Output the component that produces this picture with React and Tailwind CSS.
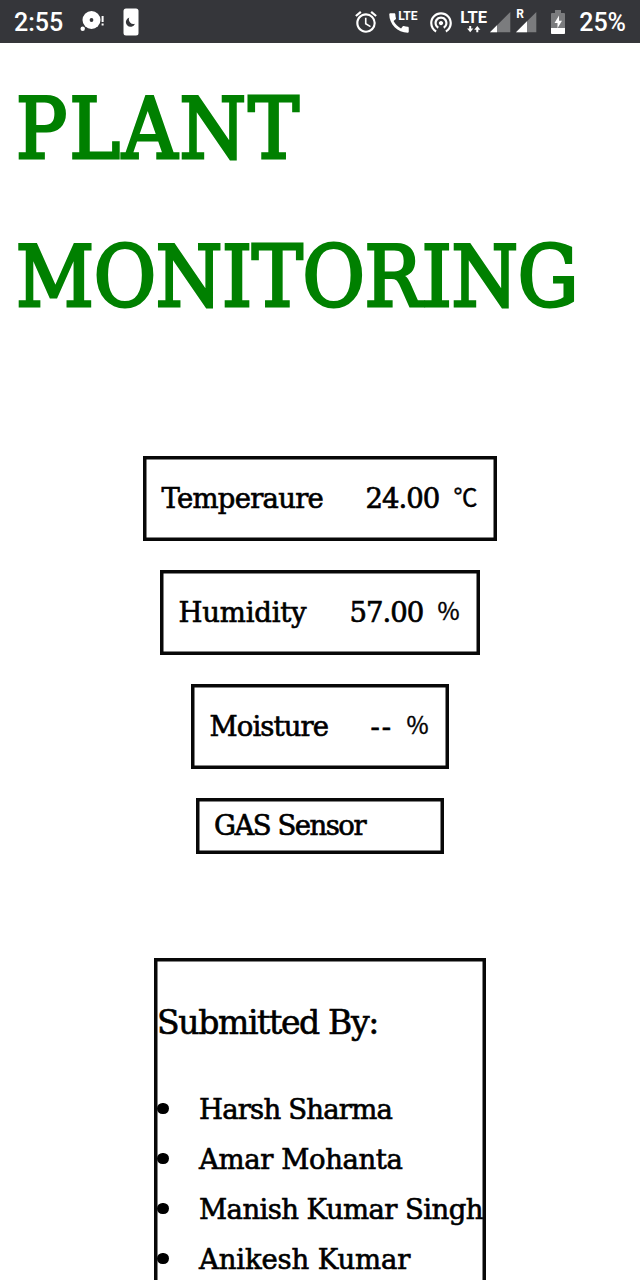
import { MdAlarm, MdCall, MdWifiTethering } from "react-icons/md";

function ChatIcon() {
  return (
    <svg className="block h-6 w-6 shrink-0" viewBox="0 0 24 24" fill="#fff">
      <circle cx="11.5" cy="10" r="9" />
      <circle cx="11.5" cy="10" r="1.9" fill="#35363a" />
      <circle cx="2.7" cy="18.8" r="2.2" />
      <path d="M21.6 6h2v6h-2zM21.6 13.5h2v2h-2z" />
    </svg>
  );
}

function MoonPhoneIcon() {
  return (
    <svg className="block h-7 w-4 shrink-0" viewBox="0 0 16 28">
      <rect x="0.5" y="0.5" width="15" height="27" rx="2.5" fill="#fff" />
      <path d="M6.3 9.5a4.7 4.7 0 1 0 5.7 6.2 4.6 4.6 0 0 1-5.7-6.2z" fill="#35363a" />
    </svg>
  );
}

function CallLteIcon() {
  return (
    <div className="relative h-6 w-[30px] shrink-0">
      <MdCall className="absolute -left-[4px] top-0 h-[26px] w-[26px]" />
      <span className="absolute left-[8px] top-0 text-[12px] font-bold leading-none">LTE</span>
    </div>
  );
}

function LteDataIcon() {
  return (
    <div className="flex w-[27px] shrink-0 flex-col items-center">
      <span className="text-[16.5px] font-bold leading-[15px]">LTE</span>
      <svg className="mt-px block h-[7px] w-[14px]" viewBox="0 0 14 7" fill="#fff">
        <path d="M2.2 0h2v2.5h2.1L3.2 6.2.1 2.5h2.1zM9.3 6.2h2V3.7h2.1L10.3 0 7.2 3.7h2.1z" />
      </svg>
    </div>
  );
}

function SignalIcon({ level, roaming }) {
  return (
    <div className="relative h-6 w-[21px] shrink-0">
      <svg className="block h-6 w-[21px]" viewBox="0 0 21 24">
        <path d="M0 22.3 20.3 2V22.3z" fill="#7b7c7e" />
        <path d={`M0 22.3 ${level} ${22.3 - level}V22.3z`} fill="#fff" />
      </svg>
      {roaming && (
        <span className="absolute -top-[1px] left-0 bg-[#35363a] pr-[2px] text-[12px] font-bold leading-[10px]">R</span>
      )}
    </div>
  );
}

function BatteryIcon() {
  return (
    <svg className="block h-6 w-[14px] shrink-0" viewBox="0 0 14 24">
      <path d="M4 0h6v3h3a1 1 0 0 1 1 1v19a1 1 0 0 1-1 1H1a1 1 0 0 1-1-1V4a1 1 0 0 1 1-1h3z" fill="#7b7c7e" />
      <path d="M0 18h14v5a1 1 0 0 1-1 1H1a1 1 0 0 1-1-1z" fill="#fff" />
      <path d="M8 5.5 3.5 13H6.5v5.2L11 10.8H8z" fill="#fff" />
    </svg>
  );
}

function StatusBar() {
  return (
    <header className="flex h-[43px] items-center bg-[#35363a] pl-[14px] font-['Roboto',sans-serif] font-medium text-white">
      <span className="w-[66px] pt-[2px] text-[25px] leading-none">2:55</span>
      <ChatIcon />
      <div className="ml-[19px]"><MoonPhoneIcon /></div>
      <div className="ml-auto flex items-center pr-[14px]">
        <MdAlarm className="h-[26px] w-[26px]" />
        <div className="ml-[11px]"><CallLteIcon /></div>
        <MdWifiTethering className="ml-[8px] h-[26px] w-[26px]" />
        <div className="ml-[6px]"><LteDataIcon /></div>
        <div className="ml-[3px]"><SignalIcon level={7} /></div>
        <div className="ml-[5px]"><SignalIcon level={11} roaming /></div>
        <div className="ml-[14px]"><BatteryIcon /></div>
        <span className="ml-[14px] pt-[2px] text-[25px] leading-none">25%</span>
      </div>
    </header>
  );
}

const box = "border-3 border-[#080808] shadow-[inset_0_0_0_0.5px_#080808]";

function Reading({ label, value, unit, className, labelClass, valueClass }) {
  return (
    <div className={`flex h-[85px] items-center whitespace-nowrap pl-[15.5px] ${box} ${className}`}>
      <span className={`shrink-0 ${labelClass}`}>{label}</span>
      <span className={`shrink-0 ${valueClass}`}>{value}</span>
      <span className="shrink-0 pb-[5px] font-['Noto_Sans_CJK_JP','Noto_Sans_CJK_SC',sans-serif] text-[24px] [-webkit-text-stroke:0.4px_#000]">{unit}</span>
    </div>
  );
}

const members = [
  { name: "Harsh Sharma", spacing: "tracking-[-0.8px]" },
  { name: "Amar Mohanta", spacing: "tracking-[-0.4px]" },
  { name: "Manish Kumar Singh", spacing: "tracking-[-0.58px]" },
  { name: "Anikesh Kumar", spacing: "tracking-[-0.15px]" },
];

export default function App() {
  return (
    <div className="h-[1280px] w-[640px] overflow-hidden bg-white font-['DejaVu_Serif',serif] text-black">
      <StatusBar />
      <h1 className="mt-[12px] h-[401px] pl-[16px] font-['DejaVu_Serif_Condensed','DejaVu_Serif',serif] text-[84.5px] font-stretch-condensed leading-[148px] text-[#008000] [-webkit-text-stroke:3px_#008000]">
        <span className="block tracking-[2.3px]">PLANT</span>
        <span className="block tracking-[-0.2px]">MONITORING</span>
      </h1>
      <main className="flex flex-col items-center text-[27.5px] leading-none [-webkit-text-stroke:0.65px_#000]">
        <Reading label="Temperaure" value="24.00" unit="℃" className="w-[354px]"
          labelClass="w-[204px] tracking-[-0.75px]" valueClass="w-[88px] tracking-[-1px]" />
        <Reading label="Humidity" value="57.00" unit="%" className="mt-[29px] w-[320px]"
          labelClass="w-[171px] tracking-[-0.2px]" valueClass="w-[88px] tracking-[-1px]" />
        <Reading label="Moisture" value="--" unit="%" className="mt-[29px] w-[258px]"
          labelClass="w-[161px] tracking-[-0.9px]" valueClass="w-[36px] tracking-[2px]" />
        <div className={`mt-[29px] flex h-[56px] w-[248px] items-center whitespace-nowrap pl-[15px] ${box}`}>
          <span className="tracking-[-1.5px]">GAS Sensor</span>
        </div>
        <section className={`mt-[104px] h-[400px] w-[332px] whitespace-nowrap ${box}`}>
          <h2 className="mt-[44px] text-[33px] leading-[36px] tracking-[-1.35px]">Submitted By:</h2>
          <ul className="mt-[44px]">
            {members.map((m) => (
              <li key={m.name} className="flex h-[49.8px] items-center">
                <span className="mr-[30px] h-[11px] w-[12px] shrink-0 -translate-y-px rounded-full bg-black" />
                <span className={m.spacing}>{m.name}</span>
              </li>
            ))}
          </ul>
        </section>
      </main>
    </div>
  );
}
